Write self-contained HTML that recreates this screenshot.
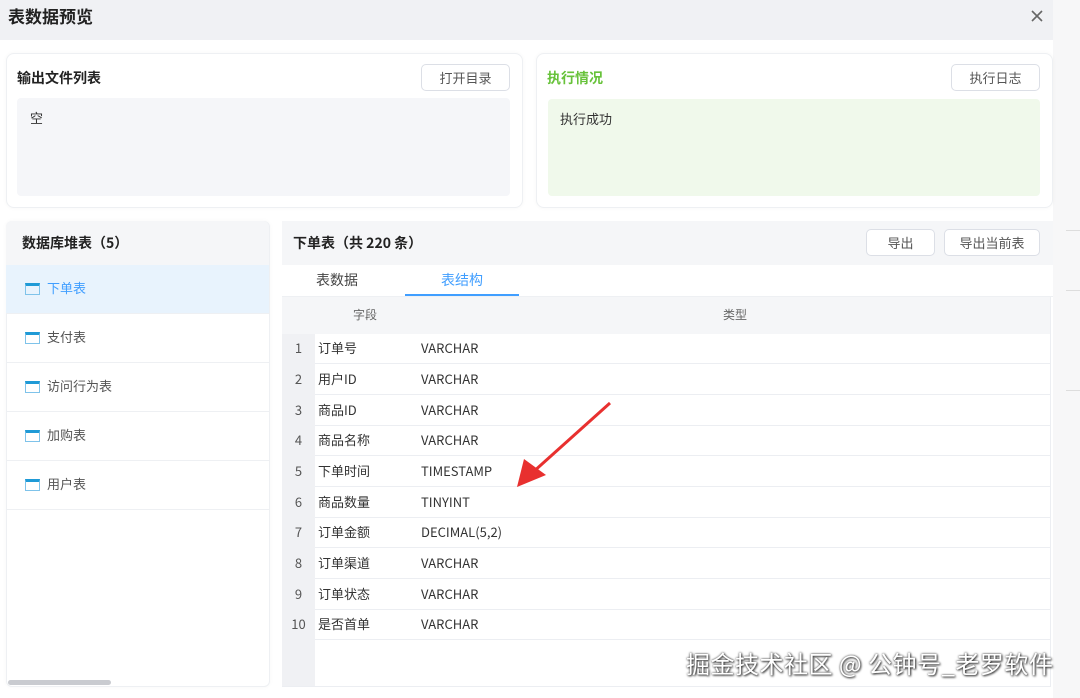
<!DOCTYPE html>
<html><head><meta charset="utf-8"><style>
*{box-sizing:border-box;margin:0;padding:0}
body{width:1080px;height:698px;overflow:hidden;background:#f4f4f5;font-family:"Noto Sans CJK SC","Liberation Sans",sans-serif;font-size:13px;line-height:16px;color:#333;position:relative}
.a{position:absolute}
.dlg{left:0;top:0;width:1053px;height:698px;background:#fff}
.hd{left:0;top:0;width:1053px;height:40px;background:#f0f1f4}
.card{border:1px solid #eef0f3;border-radius:8px;background:#fff;box-shadow:0 0 4px rgba(0,0,0,.04)}
.btn{border:1px solid #dcdfe6;border-radius:5px;background:#fff;text-align:center;font-size:13px;color:#555;line-height:25px}
.b{font-weight:bold;font-size:14px;color:#222}
.row{left:315px;width:735px;height:31px;border-bottom:1px solid #eceef2;font-size:13px;color:#333}
.num{left:282px;width:33px;text-align:center;font-size:13px;color:#555}
.it{left:6px;width:263px;height:49px;border-bottom:1px solid #eef0f3;color:#555;font-size:13px}
.ic{position:absolute;left:19px;top:18px;width:15px;height:12px;border:1px solid #7fc3ea;border-top:3px solid #1f9ad6}
</style></head><body>
<div class="a" style="left:1053px;top:0;width:27px;height:698px;background:#f7f7f8"></div>
<div class="a" style="left:1066px;top:230px;width:14px;height:1px;background:#ddd"></div>
<div class="a" style="left:1066px;top:290px;width:14px;height:1px;background:#ddd"></div>
<div class="a" style="left:1066px;top:390px;width:14px;height:1px;background:#ddd"></div>
<div class="a dlg"></div>
<div class="a hd"></div>
<div class="a" style="left:8px;top:6px;font-size:17px;line-height:20px;font-weight:bold;color:#222">表数据预览</div>
<svg class="a" style="left:1031px;top:10px" width="12" height="12"><path d="M1 1L11 11M11 1L1 11" stroke="#666" stroke-width="1.6"/></svg>

<div class="a card" style="left:6px;top:53px;width:517px;height:155px"></div>
<div class="a b" style="left:17px;top:70px">输出文件列表</div>
<div class="a btn" style="left:421px;top:64px;width:89px;height:27px">打开目录</div>
<div class="a" style="left:17px;top:98px;width:493px;height:98px;background:#f5f6f9;border-radius:4px"></div>
<div class="a" style="left:30px;top:110px">空</div>

<div class="a card" style="left:536px;top:53px;width:517px;height:155px"></div>
<div class="a b" style="left:547px;top:70px;color:#67c23a">执行情况</div>
<div class="a btn" style="left:951px;top:64px;width:89px;height:27px">执行日志</div>
<div class="a" style="left:548px;top:99px;width:492px;height:97px;background:#f0f9eb;border-radius:4px"></div>
<div class="a" style="left:560px;top:111px">执行成功</div>

<div class="a card" style="left:6px;top:221px;width:264px;height:466px;border-radius:6px"></div>
<div class="a" style="left:6px;top:221px;width:263px;height:44px;background:#f5f6f8;border-radius:6px 6px 0 0"></div>
<div class="a b" style="left:22px;top:235px">数据库堆表（5）</div>
<div class="a it" style="top:265px;background:#e8f3fd;color:#409eff"><span class="ic"></span><span class="a" style="left:41px;top:15px">下单表</span></div>
<div class="a it" style="top:314px"><span class="ic"></span><span class="a" style="left:41px;top:15px">支付表</span></div>
<div class="a it" style="top:363px"><span class="ic"></span><span class="a" style="left:41px;top:15px">访问行为表</span></div>
<div class="a it" style="top:412px"><span class="ic"></span><span class="a" style="left:41px;top:15px">加购表</span></div>
<div class="a it" style="top:461px"><span class="ic"></span><span class="a" style="left:41px;top:15px">用户表</span></div>
<div class="a" style="left:8px;top:680px;width:103px;height:5px;background:#c9cbd0;border-radius:3px"></div>

<div class="a" style="left:282px;top:221px;width:771px;height:44px;background:#f5f6f8"></div>
<div class="a b" style="left:293px;top:235px">下单表（共 220 条）</div>
<div class="a btn" style="left:866px;top:229px;width:69px;height:27px">导出</div>
<div class="a btn" style="left:944px;top:229px;width:96px;height:27px">导出当前表</div>
<div class="a" style="left:316px;top:272px;font-size:14px;color:#444">表数据</div>
<div class="a" style="left:441px;top:272px;font-size:14px;color:#409eff">表结构</div>
<div class="a" style="left:405px;top:294px;width:114px;height:2px;background:#409eff"></div>
<div class="a" style="left:282px;top:296px;width:771px;height:1px;background:#eef0f3"></div>
<div class="a" style="left:282px;top:297px;width:769px;height:37px;background:#f5f6f8"></div>
<div class="a" style="left:353px;top:307px;font-size:12px;color:#666">字段</div>
<div class="a" style="left:723px;top:307px;font-size:12px;color:#666">类型</div>
<div class="a" style="left:282px;top:334px;width:33px;height:353px;background:#f0f1f4"></div>
<div class="a" style="left:1050px;top:297px;width:1px;height:390px;background:#eceef2"></div>
<div class="a" style="left:282px;top:686px;width:769px;height:1px;background:#eceef2"></div>

<div class="a num" style="top:340px">1</div><div class="a row" style="top:333px"><span class="a" style="left:3px;top:7px">订单号</span><span class="a" style="left:106px;top:7px">VARCHAR</span></div>
<div class="a num" style="top:371px">2</div><div class="a row" style="top:364px"><span class="a" style="left:3px;top:7px">用户ID</span><span class="a" style="left:106px;top:7px">VARCHAR</span></div>
<div class="a num" style="top:402px">3</div><div class="a row" style="top:395px"><span class="a" style="left:3px;top:7px">商品ID</span><span class="a" style="left:106px;top:7px">VARCHAR</span></div>
<div class="a num" style="top:432px">4</div><div class="a row" style="top:425px"><span class="a" style="left:3px;top:7px">商品名称</span><span class="a" style="left:106px;top:7px">VARCHAR</span></div>
<div class="a num" style="top:463px">5</div><div class="a row" style="top:456px"><span class="a" style="left:3px;top:7px">下单时间</span><span class="a" style="left:106px;top:7px">TIMESTAMP</span></div>
<div class="a num" style="top:494px">6</div><div class="a row" style="top:487px"><span class="a" style="left:3px;top:7px">商品数量</span><span class="a" style="left:106px;top:7px">TINYINT</span></div>
<div class="a num" style="top:524px">7</div><div class="a row" style="top:517px"><span class="a" style="left:3px;top:7px">订单金额</span><span class="a" style="left:106px;top:7px">DECIMAL(5,2)</span></div>
<div class="a num" style="top:555px">8</div><div class="a row" style="top:548px"><span class="a" style="left:3px;top:7px">订单渠道</span><span class="a" style="left:106px;top:7px">VARCHAR</span></div>
<div class="a num" style="top:586px">9</div><div class="a row" style="top:579px"><span class="a" style="left:3px;top:7px">订单状态</span><span class="a" style="left:106px;top:7px">VARCHAR</span></div>
<div class="a num" style="top:616px">10</div><div class="a row" style="top:609px"><span class="a" style="left:3px;top:7px">是否首单</span><span class="a" style="left:106px;top:7px">VARCHAR</span></div>

<svg class="a" style="left:500px;top:395px" width="120" height="100"><line x1="110" y1="8" x2="32" y2="78" stroke="#e8302f" stroke-width="3"/><polygon points="17,92 24,64 46,80" fill="#e8302f"/></svg>

<div class="a" style="left:686px;top:649px;font-size:24px;line-height:28px;color:#fff;text-shadow:0 0 2px #333,1px 1px 2px #333;white-space:nowrap;letter-spacing:0.5px">掘金技术社区 @ 公钟号_老罗软件</div>
</body></html>
